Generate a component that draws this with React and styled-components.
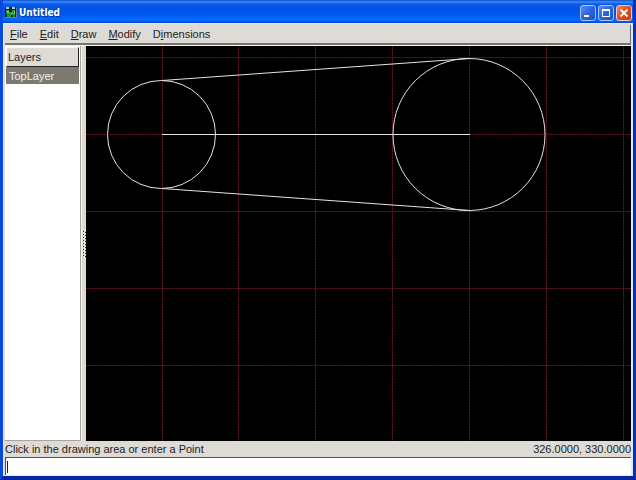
import { useState } from "react";
import styled, { createGlobalStyle } from "styled-components";

const GlobalStyle = createGlobalStyle`
	* {
		box-sizing: border-box;
	}
	body {
		margin: 0;
		font-family: "Liberation Sans", Arial, sans-serif;
		font-size: 11px;
		color: #222;
	}
	button, input {
		font: inherit;
		color: inherit;
	}
`

const Window = styled.div`
	display: flex;
	flex-direction: column;
	height: 100vh;
	border: solid;
	border-width: 0 3px 4px;
	border-color: #0a48dc #0c2fb4 #0626a4 #0a48dc;
	background: #0a48dc;
	overflow: hidden;
`

const TitleBar = styled.header`
	display: flex;
	align-items: center;
	flex: none;
	height: 23px;
	padding: 2px 1px 0 2px;
	background: linear-gradient(#0a4fd0 0, #3c8cf8 2px, #0a5ae4 4px, #0054e4 9px, #0058ee 14px, #0568fc 19px, #0560f4 21px, #0048d4 23px);
`

const Title = styled.h1`
	flex: 1;
	margin: 0 0 0 2px;
	padding-top: 1px;
	font-family: "DejaVu Sans Condensed", "DejaVu Sans", sans-serif;
	font-size: 10px;
	font-weight: 700;
	line-height: 16px;
	color: #fff;
	text-shadow: 1px 1px #0a3296;
`

const TitleButtons = styled.div`
	display: flex;
	gap: 2px;
`

const TitleButton = styled.button`
	width: 16px;
	height: 16px;
	padding: 0;
	border: 1px solid ${p => p.$close ? '#f4c8bc' : '#a4c4fa'};
	border-radius: 3px;
	background: ${p => p.$close
		? 'linear-gradient(135deg, #ee8c68, #dc4c20 50%, #c83c14)'
		: 'linear-gradient(135deg, #5c90f0, #2c64dc 50%, #1c54d0)'};

	svg {
		display: block;
	}
`

const Body = styled.main`
	display: flex;
	flex-direction: column;
	flex: 1;
	min-height: 0;
	padding: 1px 0 0 1px;
	background: #dedbd6;
	border: 1px solid #d4ecfc;
	border-right-width: 2px;
`

const MenuBar = styled.nav`
	display: flex;
	flex: none;
	height: 20px;
	border-right: 1px solid #6c6a66;
	border-bottom: 2px solid #77746c;
`

const MenuItem = styled.button`
	padding: 0 6px 0 5px;
	border: 0;
	background: none;
	line-height: 18px;

	& + & {
		padding-left: 6px;
	}
	&:hover {
		background: #ece9e4;
	}
`

const Workspace = styled.div`
	display: flex;
	flex: 1;
	min-height: 0;
	border-top: 1px solid #f6f5f2;
`

const Sidebar = styled.aside`
	flex: none;
	width: 76px;
	border-right: 1px solid #a8a59e;
	border-bottom: 1px solid #a8a59e;
	background: #fff;
`

const LayerTable = styled.table`
	width: 100%;
	border-collapse: separate;
	border-spacing: 0;
	padding: 1px 1px 0;
	text-align: left;
`

const LayerHeading = styled.th`
	height: 20px;
	padding: 0 1px;
	border: 1px solid #f6f5f2;
	border-right: 1px solid #222;
	border-bottom: 1px solid #222;
	background: #dedbd6;
	font-weight: 400;
`

const LayerCell = styled.td`
	height: 17px;
	padding: 0 3px;
	background: ${p => p.$selected ? '#7c7970' : '#fff'};
	color: ${p => p.$selected ? '#f4f4f0' : '#222'};
`

const Splitter = styled.div`
	display: flex;
	align-items: center;
	justify-content: center;
	flex: none;
	width: 5px;
	background: #dedbd6;
	border-left: 1px solid #f6f5f2;
	cursor: col-resize;
`

const Canvas = styled.svg`
	display: block;
	flex: 1;
	min-width: 0;
	height: 100%;
	background: #000;
`

const StatusBar = styled.footer`
	display: flex;
	justify-content: space-between;
	flex: none;
	height: 16px;
	line-height: 17px;
`

const Prompt = styled.label`
	display: flex;
	align-items: center;
	flex: none;
	height: 18px;
	padding-left: 1px;
	border-top: 1px solid #55534e;
	border-left: 1px solid #55534e;
	background: #fff;
`

const Caret = styled.span`
	width: 1px;
	height: 12px;
	background: #222;
`

const CommandInput = styled.input`
	flex: 1;
	min-width: 0;
	height: 14px;
	padding: 0;
	border: 0;
	outline: 0;
	background: none;
	caret-color: transparent;
`

const menus = [
	['', 'F', 'ile'],
	['', 'E', 'dit'],
	['', 'D', 'raw'],
	['', 'M', 'odify'],
	['D', 'i', 'mensions'],
]

const columns = [76, 152, 229, 306, 383, 460, 537]
const rows = [11, 88, 165, 242, 319]

function AppIcon() {
	return <svg width="12" height="13" viewBox="0 0 12 13" aria-hidden="true">
		<path d="M0 1h11v11H0z" fill="#092611" />
		<path d="M1 1h3v2H1zM7 1h3v2H7z" fill="#b4c6cf" />
		<path d="M1 4h3v2h3V4h3v7H8V9H6v2H2V8H1z" fill="#28923c" />
		<path d="M2 5h2v2H2zM6 7h2v1H6zM9 5h1v3H9z" fill="#63dd51" />
		<path d="M0 12h12V2h-1v9H0z" fill="#747c87" />
	</svg>
}

function Grip() {
	return <svg width="4" height="26" aria-hidden="true" shapeRendering="crispEdges">
		{Array.from({ length: 9 }, (_, i) => <g key={i}>
			<path d={`M0 ${i * 3}h1v1H0zM2 ${i * 3 + 1}h1v1H2z`} fill="#fff" />
			<path d={`M1 ${i * 3}h1v1H1zM3 ${i * 3 + 1}h1v1H3z`} fill="#222" />
		</g>)}
	</svg>
}

function Grid({ stroke, dash }) {
	return <g stroke={stroke} strokeDasharray={dash} shapeRendering="crispEdges">
		{columns.map(x => <line key={x} x1={x + 0.5} y1="0" x2={x + 0.5} y2="100%" />)}
		{rows.map(y => <line key={y} x1="0" y1={y + 0.5} x2="100%" y2={y + 0.5} />)}
	</g>
}

function Drawing() {
	return <Canvas role="img" aria-label="Drawing area">
		<Grid stroke="#3a0810" />
		<Grid stroke="#6a1c26" dash="1 2" />
		<g fill="none" stroke="#e4e4e4">
			<circle cx="75.5" cy="88.5" r="54" />
			<circle cx="383" cy="88.5" r="76" />
			<path d="M76 34.5L383.5 12.5M76 88.5H384M76 142.5L383.5 164.5" />
		</g>
	</Canvas>
}

export default function App() {
	const [command, setCommand] = useState('')

	return <>
		<GlobalStyle />
		<Window>
			<TitleBar>
				<AppIcon />
				<Title>Untitled</Title>
				<TitleButtons>
					<TitleButton aria-label="Minimize">
						<svg width="14" height="14"><path d="M3 9h5v2H3z" fill="#fff" /></svg>
					</TitleButton>
					<TitleButton aria-label="Maximize">
						<svg width="14" height="14"><path d="M3 3h8v8H3zM4 5v5h6V5z" fill="#fff" fillRule="evenodd" /></svg>
					</TitleButton>
					<TitleButton $close aria-label="Close">
						<svg width="14" height="14"><path d="M3.5 3.5l7 7M10.5 3.5l-7 7" stroke="#fff" strokeWidth="1.8" /></svg>
					</TitleButton>
				</TitleButtons>
			</TitleBar>
			<Body>
				<MenuBar>
					{menus.map(([before, key, after]) => <MenuItem key={before + key + after}>
						{before}<u>{key}</u>{after}
					</MenuItem>)}
				</MenuBar>
				<Workspace>
					<Sidebar>
						<LayerTable>
							<thead>
								<tr><LayerHeading scope="col">Layers</LayerHeading></tr>
							</thead>
							<tbody>
								<tr><LayerCell $selected>TopLayer</LayerCell></tr>
							</tbody>
						</LayerTable>
					</Sidebar>
					<Splitter role="separator" aria-orientation="vertical">
						<Grip />
					</Splitter>
					<Drawing />
				</Workspace>
				<StatusBar>
					<span>Click in the drawing area or enter a Point</span>
					<span>326.0000, 330.0000</span>
				</StatusBar>
				<Prompt>
					<Caret />
					<CommandInput
						aria-label="Command"
						value={command}
						onChange={e => setCommand(e.target.value)}
					/>
				</Prompt>
			</Body>
		</Window>
	</>
}
